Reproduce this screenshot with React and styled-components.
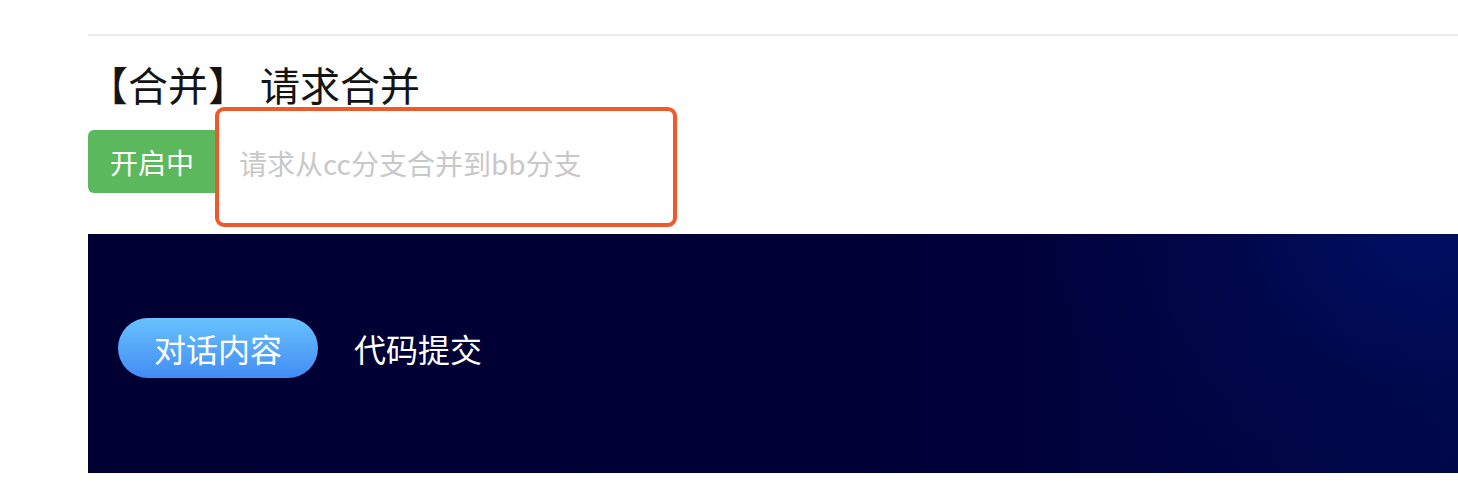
import styled, { createGlobalStyle } from "styled-components"

const GlobalStyle = createGlobalStyle`
body{
    margin:0;
    background:#fff;
    font-family: "Noto Sans CJK SC", "Noto Sans", sans-serif;
}
`

const App = () => {
    return (
        <>
        <GlobalStyle/>
        <Page>
            <Divider/>
            <Title>【合并】 请求合并</Title>
            <StatusRow>
                <StatusBadge>开启中</StatusBadge>
                <DescBox placeholder="请求从cc分支合并到bb分支"/>
            </StatusRow>
            <Banner>
                <TabPill active>对话内容</TabPill>
                <TabPill>代码提交</TabPill>
            </Banner>
        </Page>
        </>
    )
}

//styling starts----------------------------------------
const Orange = "#ef5a2c"

const Page = styled.div`
padding:34px 0 0 88px;
`

const Divider = styled.div`
height:2px;
background:#ededed;
`

const Title = styled.h1`
margin:24px 0 0 0;
font-size:40px;
font-weight:400;
line-height:48px;
color:#141414;
white-space:pre;
word-spacing:3px;
`

const StatusRow = styled.div`
position:relative;
margin-top:22px;
display:flex;
align-items:center;
`

const StatusBadge = styled.div`
height:63px;
padding:0 34px 0 22px;
display:flex;
align-items:center;
background:#5cb85c;
color:#fff;
font-size:28px;
border-radius:6px;
`

const DescBox = styled.textarea`
position:absolute;
left:127px;
top:-23px;
width:462px;
height:120px;
box-sizing:border-box;
border:4px solid ${Orange};
border-radius:9px;
background:#fff;
padding:34px 20px 0 20px;
font-family:"Noto Sans CJK SC", sans-serif;
font-size:28px;
line-height:36px;
resize:none;
outline:none;
&::placeholder{
    color:#c8c8c8;
}
`

const Banner = styled.div`
margin-top:41px;
height:239px;
box-sizing:border-box;
padding:84px 30px 0 30px;
display:flex;
align-items:flex-start;
gap:4px;
background:
    radial-gradient(ellipse 380px 300px at 97% 0%, rgba(0,18,110,0.7) 0%, rgba(0,12,90,0.35) 50%, rgba(0,0,60,0) 100%),
    linear-gradient(90deg, #000033 0%, #000038 60%, #000848 100%);
`

const TabPill = styled.div`
width:${p => p.active ? "200px" : "auto"};
height:60px;
padding:${p => p.active ? "0" : "0 32px"};
display:flex;
align-items:center;
justify-content:center;
border-radius:30px;
color:#fff;
font-size:32px;
background:${p => p.active ? "linear-gradient(180deg,#68c2fd 0%,#428cf3 100%)" : "transparent"};
`

export default App
